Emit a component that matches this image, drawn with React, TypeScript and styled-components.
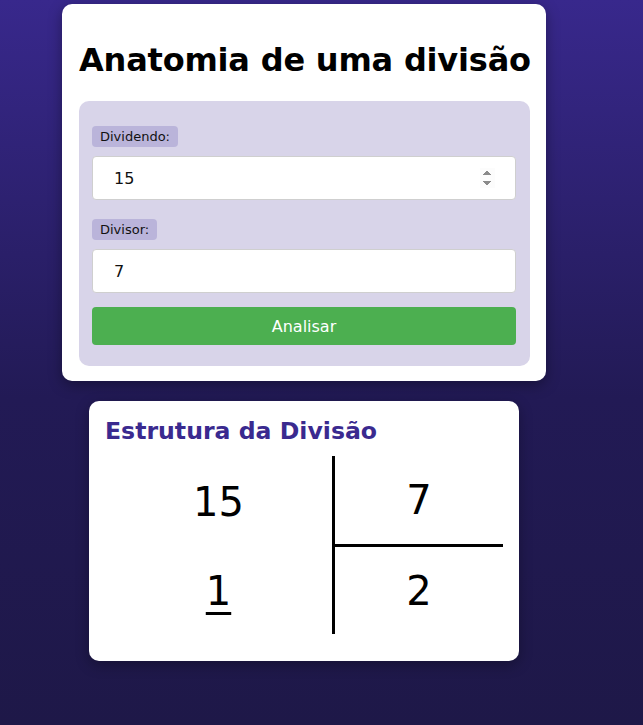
import React, { useState } from "react";
import styled, { createGlobalStyle } from "styled-components";

const GlobalStyle = createGlobalStyle`
  html, body {
    margin: 0;
    padding: 0;
  }
  body {
    min-height: 100vh;
    background: linear-gradient(to bottom, #38288c 0%, #221a55 55%, #1e1848 100%);
    font-family: "DejaVu Sans", Verdana, sans-serif;
  }
`;

const Page = styled.div`
  width: 608px;
  display: flex;
  flex-direction: column;
  align-items: center;
  gap: 20px;
  padding-top: 4px;
`;

const Card = styled.div`
  width: 484px;
  box-sizing: border-box;
  background: #fff;
  border-radius: 10px;
  padding: 16px 16px 15px 17px;
  box-shadow: 0 4px 14px rgba(0, 0, 0, 0.35);
`;

const Title = styled.h1`
  margin: 21px 0 22px;
  font-size: 32px;
  font-weight: bold;
  letter-spacing: -0.2px;
  color: #000;
  line-height: 38px;
  white-space: nowrap;
`;

const FormPanel = styled.div`
  background: #d8d4e9;
  border-radius: 10px;
  padding: 25px 14px 21px 13px;
  display: flex;
  flex-direction: column;
`;

const Label = styled.label`
  align-self: flex-start;
  background: #bab4da;
  border-radius: 4px;
  padding: 0 8px;
  height: 21px;
  line-height: 21px;
  font-size: 13px;
  color: #111;
  margin-bottom: 9px;
`;

const Input = styled.input<{ $gap: number }>`
  box-sizing: border-box;
  width: 100%;
  height: 44px;
  border: 1px solid #cfcfcf;
  border-radius: 4px;
  background: #fff;
  padding: 0 20px 0 21px;
  font-family: "DejaVu Sans", Verdana, sans-serif;
  font-size: 16px;
  color: #111;
  outline: none;
  margin-bottom: ${(p) => p.$gap}px;

  &::-webkit-inner-spin-button {
    opacity: 1;
    height: 20px;
  }
`;

const Button = styled.button`
  height: 38px;
  border: none;
  border-radius: 4px;
  background: #4caf50;
  color: #fff;
  font-family: "DejaVu Sans", Verdana, sans-serif;
  font-size: 16px;
  cursor: pointer;
`;

const ResultCard = styled.div`
  width: 430px;
  box-sizing: border-box;
  background: #fff;
  border-radius: 10px;
  padding: 16px 16px 27px;
  box-shadow: 0 4px 14px rgba(0, 0, 0, 0.3);
`;

const ResultTitle = styled.h2`
  margin: 0 0 10px;
  font-size: 23.6px;
  line-height: 29px;
  font-weight: bold;
  color: #3a2a8f;
`;

const Grid = styled.div`
  display: grid;
  grid-template-columns: 227px 1fr;
  grid-template-rows: 91px 87px;
`;

const Cell = styled.div<{ $right?: boolean; $top?: boolean }>`
  display: flex;
  align-items: center;
  justify-content: center;
  font-size: 40px;
  color: #000;
  border-left: ${(p) => (p.$right ? "3px solid #000" : "none")};
  border-bottom: ${(p) => (p.$right && p.$top ? "3px solid #000" : "none")};
`;

const Remainder = styled.span`
  text-decoration: underline;
  text-decoration-thickness: 3px;
  text-underline-offset: 7px;
`;

export default function App() {
  const [dividendo, setDividendo] = useState("15");
  const [divisor, setDivisor] = useState("7");
  const [result, setResult] = useState({ a: 15, b: 7, q: 2, r: 1 });

  const analisar = () => {
    const a = parseInt(dividendo, 10);
    const b = parseInt(divisor, 10);
    if (isNaN(a) || isNaN(b) || b === 0) return;
    setResult({ a, b, q: Math.floor(a / b), r: a % b });
  };

  return (
    <>
      <GlobalStyle />
      <Page>
        <Card>
          <Title>Anatomia de uma divisão</Title>
          <FormPanel>
            <Label htmlFor="dividendo">Dividendo:</Label>
            <Input
              id="dividendo"
              type="number"
              $gap={19}
              value={dividendo}
              onChange={(e) => setDividendo(e.target.value)}
            />
            <Label htmlFor="divisor">Divisor:</Label>
            <Input
              id="divisor"
              type="text"
              $gap={14}
              value={divisor}
              onChange={(e) => setDivisor(e.target.value)}
            />
            <Button onClick={analisar}>Analisar</Button>
          </FormPanel>
        </Card>
        <ResultCard>
          <ResultTitle>Estrutura da Divisão</ResultTitle>
          <Grid>
            <Cell>{result.a}</Cell>
            <Cell $right $top>
              {result.b}
            </Cell>
            <Cell>
              <Remainder>{result.r}</Remainder>
            </Cell>
            <Cell $right>{result.q}</Cell>
          </Grid>
        </ResultCard>
      </Page>
    </>
  );
}
